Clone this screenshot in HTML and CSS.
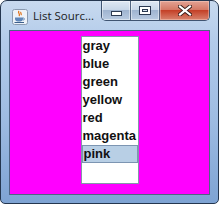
FILE: index.html
```html
<!DOCTYPE html>
<html lang="en">
<head>
  <meta charset="UTF-8" />
  <meta name="viewport" content="width=device-width, initial-scale=1.0"/>
  <title>List Source</title>
  <link rel="stylesheet" href="styles.css">
</head>
<body>
  <div class="window">
    <div class="titlebar">
      <svg class="app-icon" width="16" height="16" viewBox="0 0 16 16">
        <rect x="0.5" y="0.5" width="15" height="15" rx="2" fill="#eef2f8" stroke="#8a9ab0"/>
        <path d="M7 2 C5 4 9 5 7 7 M9 3 C8 4 10 5 9 6" stroke="#e0731c" stroke-width="1.3" fill="none"/>
        <path d="M3 8.5 H11 V10 C11 12 9 12.5 7 12.5 C5 12.5 3 12 3 10 Z" fill="#5f86b8"/>
        <path d="M11 9 C13 9 13 11 11 11" stroke="#5f86b8" stroke-width="1" fill="none"/>
        <path d="M2.5 13.5 H12" stroke="#3d5f8c" stroke-width="1"/>
      </svg>
      <span class="title">List Sourc...</span>
      <div class="controls">
        <div class="btn btn-min"><span class="glyph-min"></span></div>
        <div class="btn btn-max"><span class="glyph-max"></span></div>
        <div class="btn btn-close">
          <svg width="14" height="11" viewBox="0 0 14 11">
            <path d="M2 1.5 L12 9.5 M12 1.5 L2 9.5" stroke="#3a1e1a" stroke-width="4" stroke-linecap="square"/>
            <path d="M2 1.5 L12 9.5 M12 1.5 L2 9.5" stroke="#ffffff" stroke-width="2.2" stroke-linecap="square"/>
          </svg>
        </div>
      </div>
    </div>
    <div class="frame">
      <div class="client">
        <ul class="list">
          <li>gray</li>
          <li>blue</li>
          <li>green</li>
          <li>yellow</li>
          <li>red</li>
          <li>magenta</li>
          <li class="selected">pink</li>
        </ul>
      </div>
    </div>
  </div>
</body>
</html>
```

FILE: styles.css
```css
* {
  box-sizing: border-box;
}

body {
  margin: 0;
  padding: 0;
  background: #ffffff;
}

.window {
  width: 219px;
  height: 204px;
  border: 1px solid #24364f;
  border-radius: 7px 7px 5px 5px;
  background: linear-gradient(to bottom, #c8daef 0%, #b3cbea 20%, #9dbbe2 60%, #7ea3d3 100%);
  display: flex;
  flex-direction: column;
  overflow: hidden;
}

.titlebar {
  height: 29px;
  display: flex;
  align-items: flex-start;
}

.app-icon {
  margin: 8px 0 0 11px;
  flex-shrink: 0;
}

.title {
  margin: 7px 0 0 5px;
  font-family: "Open Sans", "DejaVu Sans", sans-serif;
  font-size: 11.5px;
  color: #1b1b1b;
  white-space: nowrap;
  min-width: 0;
  overflow: hidden;
}

.controls {
  margin-left: auto;
  margin-right: 8px;
  flex-shrink: 0;
  display: flex;
  height: 20px;
  border: 1px solid #3f5471;
  border-top: none;
  border-radius: 0 0 5px 5px;
  overflow: hidden;
}

.btn {
  flex-shrink: 0;
  height: 19px;
  display: flex;
  justify-content: center;
  align-items: center;
  border-right: 1px solid #52657f;
}

.btn-min,
.btn-max {
  width: 29px;
  background: linear-gradient(to bottom, #dfe8f3 0%, #c9d7e8 45%, #9fb4d0 50%, #b9cbe2 100%);
  box-shadow: inset 0 0 0 1px rgba(255, 255, 255, 0.45);
}

.btn-close {
  width: 49px;
  border-right: none;
  background: linear-gradient(to bottom, #e3a394 0%, #d57a66 45%, #c44128 50%, #d8846e 100%);
  box-shadow: inset 0 0 0 1px rgba(255, 220, 210, 0.4);
}

.glyph-min {
  width: 11px;
  height: 5px;
  margin-top: 6px;
  background: #ffffff;
  border: 1px solid #2b3a52;
}

.glyph-max {
  width: 12px;
  height: 9px;
  border: 1px solid #2b3a52;
  background: #ffffff;
  box-shadow: inset 0 0 0 2px #ffffff, inset 0 0 0 3px #2b3a52, inset 0 0 0 8px #d6e1ee;
}

.frame {
  flex: 1;
  padding: 0 8px 8px 8px;
  display: flex;
}

.client {
  flex: 1;
  border: 1px solid #4d6484;
  background: #ff00ff;
  display: flex;
  justify-content: center;
  align-items: flex-start;
  padding-top: 5px;
}

.list {
  list-style: none;
  margin: 0;
  padding: 0;
  width: 58px;
  height: 148px;
  background: #ffffff;
  border: 1px solid #8496ab;
  font-family: "Liberation Sans", Arial, sans-serif;
  font-weight: bold;
  font-size: 13px;
  color: #111111;
}

.list li {
  height: 18px;
  line-height: 18px;
  padding-left: 1px;
  white-space: nowrap;
}

.list li.selected {
  background: #b8cfe5;
  border: 1px solid #7c95b2;
  line-height: 16px;
}
```
